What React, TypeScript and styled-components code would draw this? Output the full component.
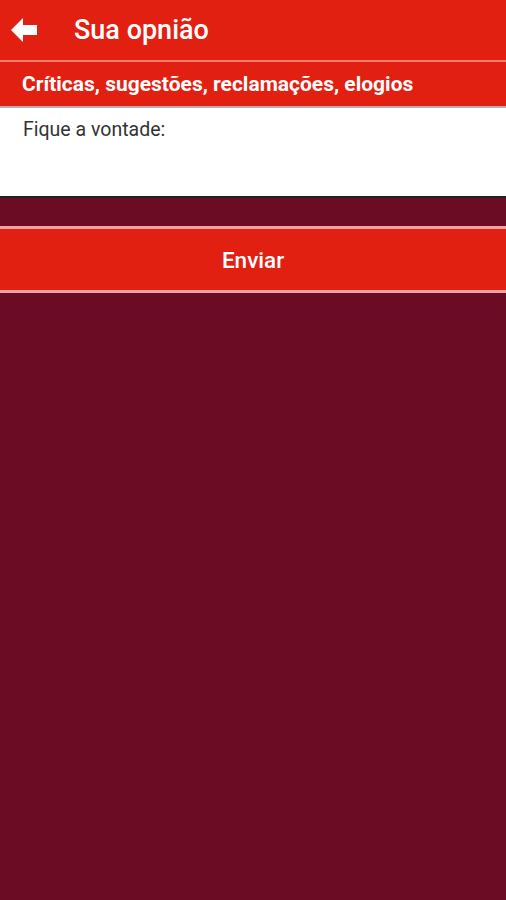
import React, { useState } from 'react';
import styled, { createGlobalStyle } from 'styled-components';

const GlobalStyle = createGlobalStyle`
  html, body {
    margin: 0;
    padding: 0;
    background: #6b0c24;
  }
  body {
    font-family: Roboto, 'Liberation Sans', sans-serif;
  }
`;

const BackArrow: React.FC = () => (
  <svg width="28" height="28" viewBox="0 0 28 28">
    <path d="M1 14 L13 2 L13 9 L27 9 L27 19 L13 19 L13 26 Z" fill="#ffffff" />
  </svg>
);

const App: React.FC = () => {
  const [message, setMessage] = useState<string>('');

  return (
    <>
      <GlobalStyle />
      <Page>
        <Toolbar>
          <BackButton>
            <BackArrow />
          </BackButton>
          <Title>Sua opnião</Title>
        </Toolbar>
        <SubHeader>Críticas, sugestões, reclamações, elogios</SubHeader>
        <MessageBox
          placeholder="Fique a vontade:"
          value={message}
          onChange={(e) => setMessage(e.target.value)}
        />
        <SendButton>Enviar</SendButton>
      </Page>
    </>
  );
};

const Page = styled.div`
  width: 100%;
  min-height: 900px;
  background: #6b0c24;
  display: flex;
  flex-direction: column;
`;

const Toolbar = styled.div`
  height: 60px;
  flex-shrink: 0;
  display: flex;
  align-items: center;
  background: #e22012;
  border-bottom: 2px solid #f07a6e;
`;

const BackButton = styled.div`
  width: 74px;
  display: flex;
  align-items: center;
  padding-left: 10px;
  box-sizing: border-box;
`;

const Title = styled.span`
  color: #ffffff;
  font-size: 27px;
  font-weight: 500;
`;

const SubHeader = styled.div`
  height: 46px;
  flex-shrink: 0;
  box-sizing: border-box;
  padding: 0 22px;
  display: flex;
  align-items: center;
  background: #e22012;
  border-bottom: 2px solid #b8b0b0;
  color: #ffffff;
  font-size: 21px;
  font-weight: 700;
`;

const MessageBox = styled.textarea`
  display: block;
  height: 90px;
  flex-shrink: 0;
  margin: 0;
  padding: 10px 23px;
  box-sizing: border-box;
  border: none;
  border-bottom: 2px solid #222222;
  background: #ffffff;
  font-family: Roboto, 'Liberation Sans', sans-serif;
  font-size: 19.5px;
  color: #333333;
  resize: none;
  outline: none;
  &::placeholder {
    color: #333333;
  }
`;

const SendButton = styled.button`
  margin-top: 28px;
  height: 67px;
  flex-shrink: 0;
  border: none;
  border-top: 3px solid #f2a3a0;
  border-bottom: 3px solid #f2a3a0;
  background: #e22012;
  color: #ffffff;
  font-family: Roboto, 'Liberation Sans', sans-serif;
  font-size: 22.5px;
  font-weight: 500;
  cursor: pointer;
`;

export default App;
